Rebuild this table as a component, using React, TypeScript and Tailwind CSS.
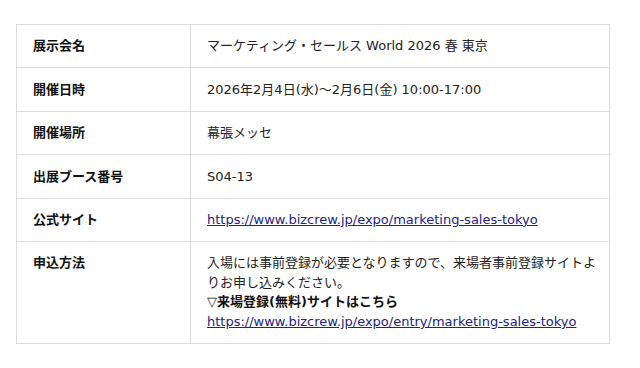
import React from "react";

const rows: { label: string; content: React.ReactNode }[] = [
  { label: "展示会名", content: "マーケティング・セールス World 2026 春 東京" },
  { label: "開催日時", content: "2026年2月4日(水)〜2月6日(金) 10:00-17:00" },
  { label: "開催場所", content: "幕張メッセ" },
  { label: "出展ブース番号", content: "S04-13" },
  {
    label: "公式サイト",
    content: (
      <a href="#" className="text-[#22228a] underline">
        https://www.bizcrew.jp/expo/marketing-sales-tokyo
      </a>
    ),
  },
  {
    label: "申込方法",
    content: (
      <>
        入場には事前登録が必要となりますので、来場者事前登録サイトよりお申し込みください。
        <br />
        <b className="font-bold text-[#111]">▽来場登録(無料)サイトはこちら</b>
        <br />
        <a href="#" className="text-[#22228a] underline">
          https://www.bizcrew.jp/expo/entry/marketing-sales-tokyo
        </a>
      </>
    ),
  },
];

export default function App() {
  return (
    <div
      className="w-[640px] h-[368px] bg-white pt-[24px] pl-[16px]"
      style={{ fontFamily: '"DejaVu Sans", "Noto Sans CJK JP", sans-serif' }}
    >
      <table className="w-[594px] border-collapse text-[13px] leading-[19.6px] text-[#222]">
        <tbody>
          {rows.map((r) => (
            <tr key={r.label}>
              <th className="w-[174px] border border-[#dcdcdc] pl-[16px] pr-[12px] py-[11.4px] text-left align-top font-bold text-[#111]">
                {r.label}
              </th>
              <td className="border border-[#dcdcdc] pl-[16px] pr-[10px] py-[11.4px] align-top">
                {r.content}
              </td>
            </tr>
          ))}
        </tbody>
      </table>
    </div>
  );
}
